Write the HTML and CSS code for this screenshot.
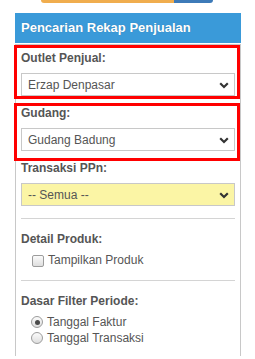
FILE: index.html
```html
<!DOCTYPE html>
<html>
<head>
<meta charset="utf-8">
<link rel="stylesheet" href="styles.css">
</head>
<body>
<div class="topbar"><div class="tb-orange"></div><div class="tb-blue"></div></div>
<div class="panel">
  <div class="panel-head">Pencarian Rekap Penjualan</div>
  <div class="panel-body">
    <div class="group hl hl-1">
      <div class="label">Outlet Penjual:</div>
      <div class="select"><span>Erzap Denpasar</span><svg class="chev" width="10" height="7" viewBox="0 0 10 7"><polyline points="1.2,1.3 5,5 8.8,1.3" fill="none" stroke="#333" stroke-width="2.2"/></svg></div>
    </div>
    <div class="group hl hl-2">
      <div class="label">Gudang:</div>
      <div class="select"><span>Gudang Badung</span><svg class="chev" width="10" height="7" viewBox="0 0 10 7"><polyline points="1.2,1.3 5,5 8.8,1.3" fill="none" stroke="#333" stroke-width="2.2"/></svg></div>
    </div>
    <div class="group">
      <div class="label">Transaksi PPn:</div>
      <div class="select yellow"><span>-- Semua --</span><svg class="chev" width="10" height="7" viewBox="0 0 10 7"><polyline points="1.2,1.3 5,5 8.8,1.3" fill="none" stroke="#333" stroke-width="2.2"/></svg></div>
    </div>
    <div class="sep"></div>
    <div class="label">Detail Produk:</div>
    <div class="check-row"><span class="checkbox"></span><span>Tampilkan Produk</span></div>
    <div class="sep"></div>
    <div class="label">Dasar Filter Periode:</div>
    <div class="radio-row first"><span class="radio on"></span><span>Tanggal Faktur</span></div>
    <div class="radio-row"><span class="radio"></span><span>Tanggal Transaksi</span></div>
  </div>
</div>
</body>
</html>
```
FILE: styles.css
```css
html, body {
  margin: 0;
  padding: 0;
  background: #fff;
  font-family: "Liberation Sans", Arial, sans-serif;
}
.topbar {
  display: flex;
  margin-left: 41px;
  width: 172px;
  height: 3px;
  border-radius: 0 0 4px 4px;
  overflow: hidden;
}
.tb-orange { width: 133px; background: #f0ad4e; }
.tb-blue { flex: 1; background: #3d7ab8; }
.panel {
  margin-top: 10px;
  margin-left: 15px;
  width: 226px;
}
.panel-head {
  height: 30px;
  box-sizing: border-box;
  padding: 7px 0 0 6px;
  background: #3a9ad9;
  color: #fff;
  font-weight: bold;
  font-size: 13px;
  line-height: 15px;
  text-shadow: 0 0 1px rgba(0,0,0,0.25);
}
.panel-body {
  margin-top: 1px;
  border: 1px solid #c8c8c8;
  border-bottom: none;
  padding: 6px 5px 10px 5px;
}
.group {
  margin-bottom: 10px;
}
.hl { position: relative; }
.hl::after {
  content: "";
  position: absolute;
  left: -7px;
  right: -5px;
  border: 3px solid #ff0000;
  pointer-events: none;
}
.hl-1::after { top: -6px; bottom: -3px; }
.hl-2::after { top: -3px; bottom: -10px; }
.label {
  font-size: 12px;
  font-weight: bold;
  line-height: 15px;
  color: #555;
}
.group .label { margin-bottom: 7px; }
.select {
  height: 23px;
  box-sizing: border-box;
  border: 1px solid #c8c8c8;
  background: #fff;
  display: flex;
  align-items: center;
  justify-content: space-between;
  padding: 0 5px 0 6px;
  font-size: 12px;
  color: #555;
}
.select.yellow { background: #fbf5a5; }
.chev { display: block; margin-top: 1px; }
.sep {
  border-top: 1px solid #d4d4d4;
  margin: 12px 0 13px;
}
.check-row, .radio-row {
  display: flex;
  align-items: center;
  font-size: 12px;
  color: #555;
}
.check-row {
  margin-top: 6px;
  line-height: 15px;
  padding-left: 11px;
}
.checkbox {
  width: 12px;
  height: 12px;
  box-sizing: border-box;
  border: 1px solid #9c9c9c;
  border-radius: 2px;
  background: linear-gradient(#fbfbfb, #dedede);
  margin-right: 4px;
}
.radio-row {
  line-height: 16px;
  padding-left: 10px;
}
.radio-row.first { margin-top: 5px; }
.radio {
  width: 12px;
  height: 12px;
  box-sizing: border-box;
  border: 1px solid #9c9c9c;
  border-radius: 50%;
  background: linear-gradient(#fbfbfb, #dedede);
  margin-right: 4px;
  display: flex;
  align-items: center;
  justify-content: center;
}
.radio.on::before {
  content: "";
  width: 5px;
  height: 5px;
  border-radius: 50%;
  background: #4a4a4a;
}
```
